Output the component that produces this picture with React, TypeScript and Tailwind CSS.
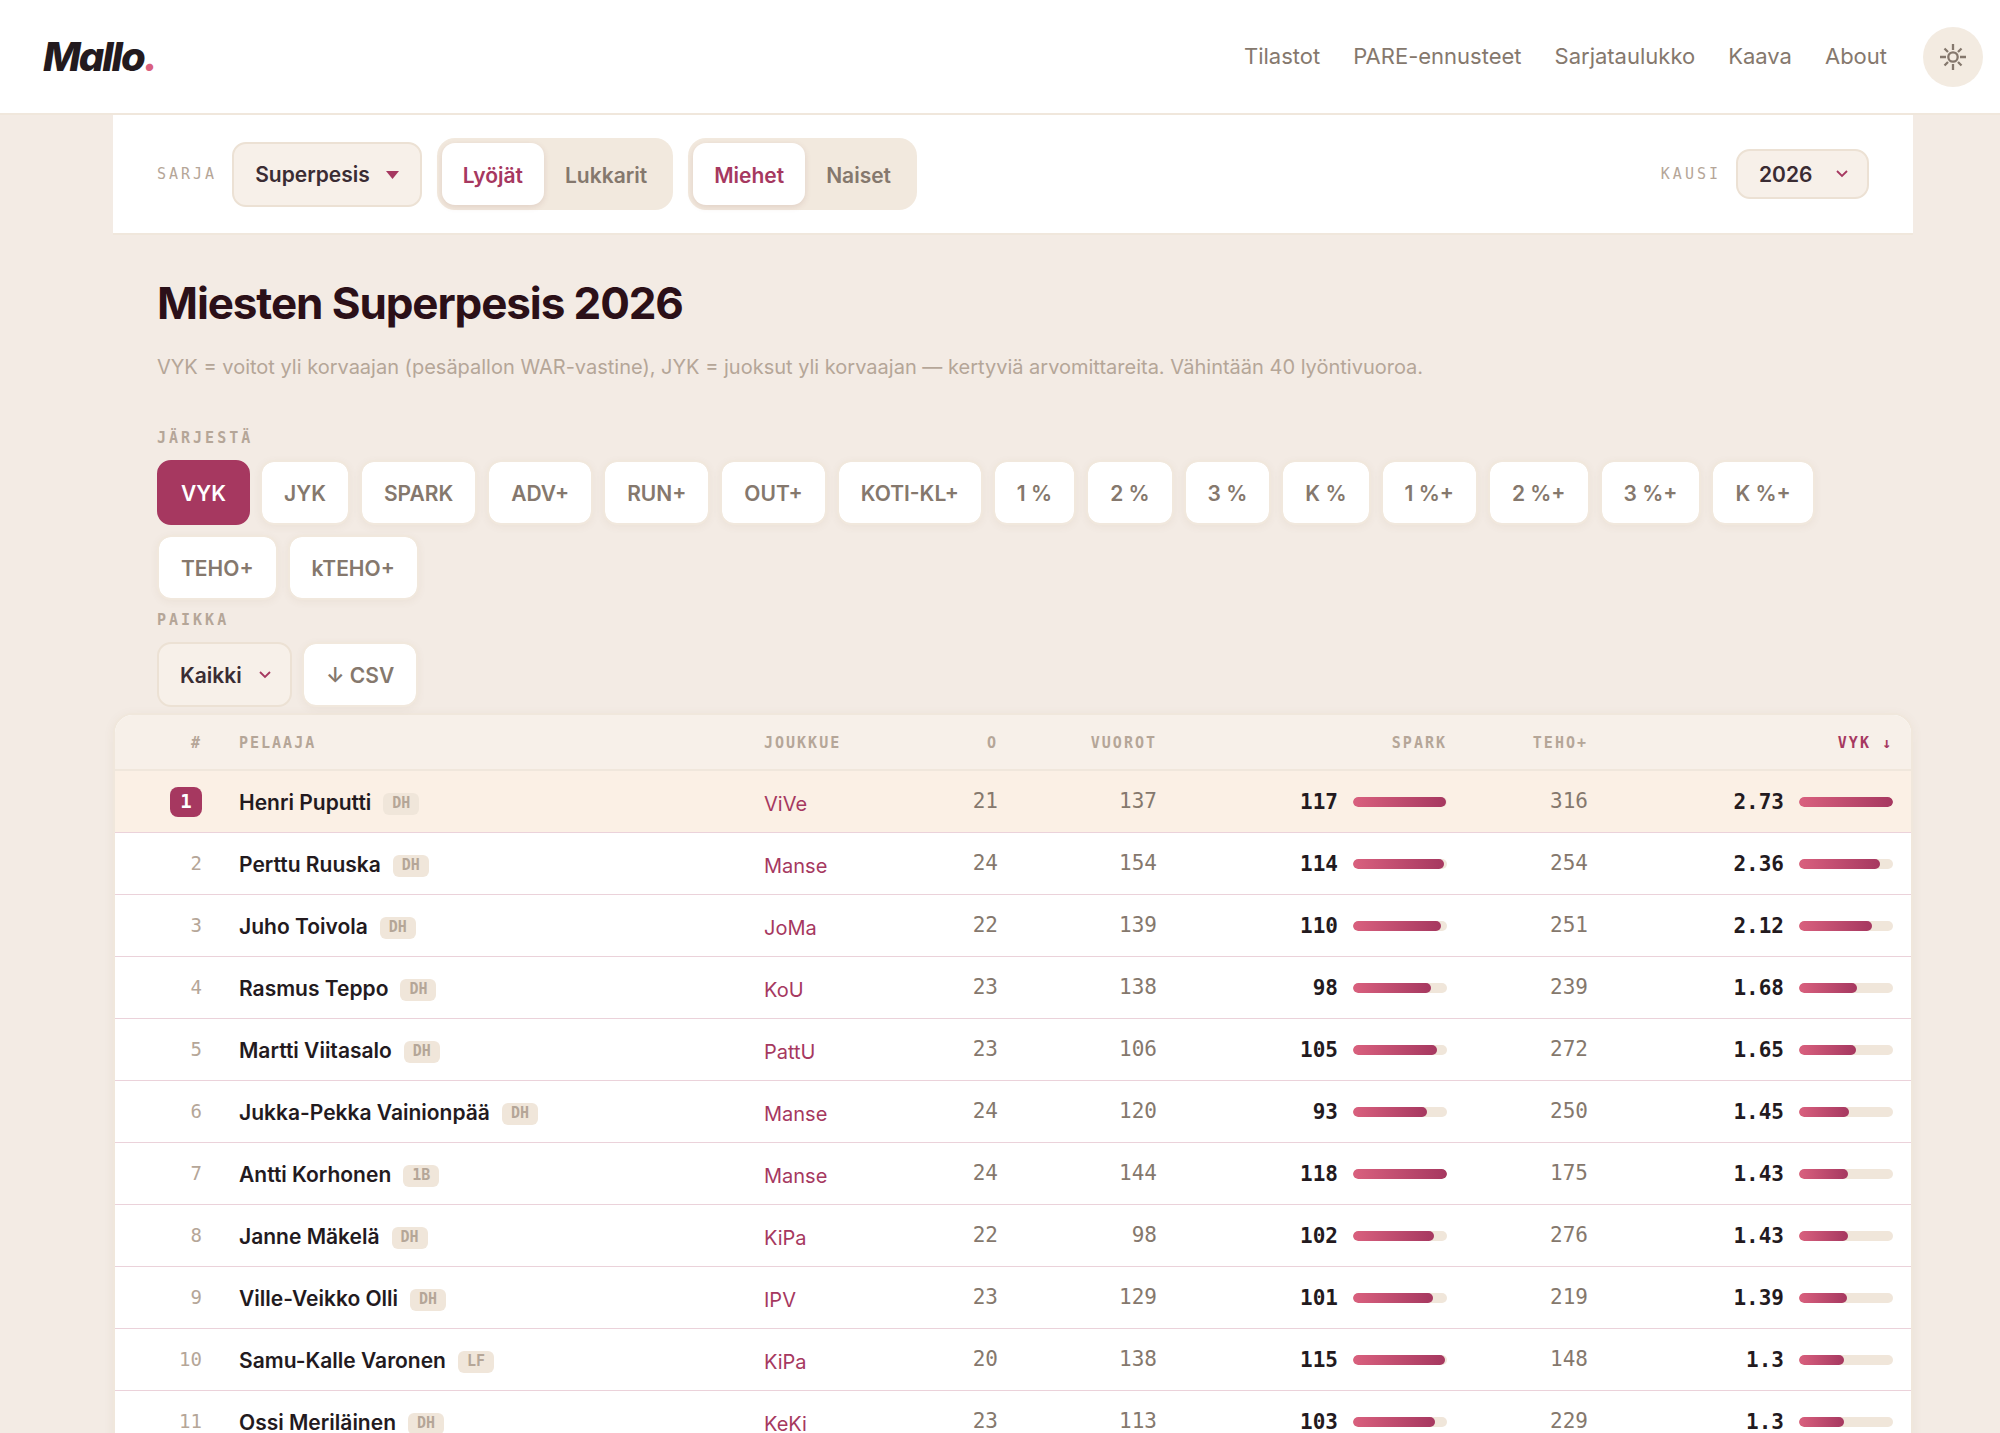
import React, { useState } from 'react';
import clsx from 'clsx';

const navLinks = ['Tilastot', 'PARE-ennusteet', 'Sarjataulukko', 'Kaava', 'About'];

const sortKeys = [
  'VYK', 'JYK', 'SPARK', 'ADV+', 'RUN+', 'OUT+', 'KOTI-KL+', '1 %', '2 %', '3 %', 'K %',
  '1 %+', '2 %+', '3 %+', 'K %+', 'TEHO+', 'kTEHO+',
];

type Player = {
  name: string;
  pos: string;
  team: string;
  games: number;
  turns: number;
  spark: number;
  teho: number;
  vyk: number;
};

const players: Player[] = [
  { name: 'Henri Puputti', pos: 'DH', team: 'ViVe', games: 21, turns: 137, spark: 117, teho: 316, vyk: 2.73 },
  { name: 'Perttu Ruuska', pos: 'DH', team: 'Manse', games: 24, turns: 154, spark: 114, teho: 254, vyk: 2.36 },
  { name: 'Juho Toivola', pos: 'DH', team: 'JoMa', games: 22, turns: 139, spark: 110, teho: 251, vyk: 2.12 },
  { name: 'Rasmus Teppo', pos: 'DH', team: 'KoU', games: 23, turns: 138, spark: 98, teho: 239, vyk: 1.68 },
  { name: 'Martti Viitasalo', pos: 'DH', team: 'PattU', games: 23, turns: 106, spark: 105, teho: 272, vyk: 1.65 },
  { name: 'Jukka-Pekka Vainionpää', pos: 'DH', team: 'Manse', games: 24, turns: 120, spark: 93, teho: 250, vyk: 1.45 },
  { name: 'Antti Korhonen', pos: '1B', team: 'Manse', games: 24, turns: 144, spark: 118, teho: 175, vyk: 1.43 },
  { name: 'Janne Mäkelä', pos: 'DH', team: 'KiPa', games: 22, turns: 98, spark: 102, teho: 276, vyk: 1.43 },
  { name: 'Ville-Veikko Olli', pos: 'DH', team: 'IPV', games: 23, turns: 129, spark: 101, teho: 219, vyk: 1.39 },
  { name: 'Samu-Kalle Varonen', pos: 'LF', team: 'KiPa', games: 20, turns: 138, spark: 115, teho: 148, vyk: 1.3 },
  { name: 'Ossi Meriläinen', pos: 'DH', team: 'KeKi', games: 23, turns: 113, spark: 103, teho: 229, vyk: 1.3 },
];

const maxSpark = Math.max(...players.map((p) => p.spark));
const maxVyk = Math.max(...players.map((p) => p.vyk));

const sans = "font-['Inter',sans-serif]";
const mono = "font-['DejaVu_Sans_Mono',monospace]";
const label = "font-['DejaVu_Sans_Mono',monospace] text-[15px] leading-5 tracking-[3px] text-[#b5a698]";
const th = 'h-[56px] border-b-2 border-[#f0e7dc] pl-[19px] pr-[18px] pt-[2px] text-[15px] font-bold tracking-[2px]';
const td = 'h-[62px] border-b border-[#ebd2da] pl-[19px] pr-[18px]';
const select = 'appearance-none border-2 border-[#ece1d4] bg-[#f7f0e9] pt-[2px] text-[21px] font-semibold text-[#3a2c33]';

function SunIcon() {
  return (
    <svg width="26" height="26" viewBox="0 0 26 26" fill="none" stroke="currentColor" strokeWidth="2.3" aria-hidden="true">
      <circle cx="13" cy="13" r="4.7" />
      <path d="M13 0v6M13 20v6M0 13h6M20 13h6M4.5 4.5L8 8M18 18l3.5 3.5M4.5 21.5L8 18M18 8l3.5-3.5" />
    </svg>
  );
}

function Chevron() {
  return (
    <svg width="14" height="10" viewBox="0 0 14 10" fill="none" stroke="#a63860" strokeWidth="1.8" className="pointer-events-none absolute right-[20px] top-1/2 -translate-y-1/2" aria-hidden="true">
      <path d="M2 2l5 5 5-5" />
    </svg>
  );
}

function Toggle({ options }: { options: string[] }) {
  const [active, setActive] = useState(options[0]);
  return (
    <div className="flex rounded-[18px] bg-[#f2e9de] p-[5px]">
      {options.map((o) => (
        <button
          key={o}
          type="button"
          aria-pressed={active === o}
          onClick={() => setActive(o)}
          className={clsx(
            'h-[62px] rounded-[13px] px-[21px] pt-[3px] text-[21px] font-semibold',
            active === o ? 'bg-white text-[#a63860] shadow-[0_2px_6px_rgba(120,60,50,0.14)]' : 'text-[#85786d]',
          )}
        >
          {o}
        </button>
      ))}
    </div>
  );
}

function Meter({ value, max }: { value: number; max: number }) {
  return (
    <div className="flex items-center justify-end gap-[15px]">
      <span className="font-bold leading-7 text-[#231a1e]">{value}</span>
      <span className="h-[10px] w-[94px] overflow-hidden rounded-full bg-[#f0e6da]">
        <span
          className="block h-full rounded-full bg-gradient-to-r from-[#d9607e] to-[#a63860]"
          style={{ width: `${(value / max) * 100}%` }}
        />
      </span>
    </div>
  );
}

function Header() {
  return (
    <header className="flex h-[115px] items-center justify-between border-b-2 border-[#f0e7dc] bg-white pl-[43px] pr-[17px]">
      <a href="#" className="text-[40px] font-extrabold italic leading-none tracking-tighter text-[#231a1e]">
        Mallo<span className="text-[#d9607e]">.</span>
      </a>
      <div className="flex items-center gap-9">
        <nav className="flex items-center gap-[33px] text-[22px] text-[#85786d]">
          {navLinks.map((l) => (
            <a key={l} href="#">{l}</a>
          ))}
        </nav>
        <button type="button" aria-label="Vaihda teema" className="flex size-[60px] items-center justify-center rounded-full bg-[#f3ebe1] text-[#85786d]">
          <SunIcon />
        </button>
      </div>
    </header>
  );
}

function Toolbar() {
  return (
    <div className="flex items-center justify-between border-b-2 border-[#f0e7dc] bg-white px-[44px] py-[23px]">
      <div className="flex items-center gap-[15px]">
        <span className={label}>SARJA</span>
        <button type="button" className={clsx(select, 'flex h-[65px] items-center gap-4 rounded-[14px] px-[21px]')}>
          Superpesis
          <svg width="13" height="8" viewBox="0 0 13 8" fill="#a63860" aria-hidden="true"><path d="M0 0h13L6.5 8z" /></svg>
        </button>
        <Toggle options={['Lyöjät', 'Lukkarit']} />
        <Toggle options={['Miehet', 'Naiset']} />
      </div>
      <div className="flex items-center gap-[15px]">
        <label htmlFor="season" className={label}>KAUSI</label>
        <div className="relative">
          <select id="season" className={clsx(select, 'h-[50px] w-[133px] rounded-[14px] pl-[21px]')}>
            <option>2026</option>
            <option>2025</option>
          </select>
          <Chevron />
        </div>
      </div>
    </div>
  );
}

function Filters() {
  const [sort, setSort] = useState('VYK');
  const pill = 'h-[65px] rounded-[14px] border-2 px-[22px] pt-[3px] text-[21px] font-semibold';
  const idle = 'border-[#f1e8dd] bg-white bg-clip-padding text-[#85786d] shadow-[0_2px_8px_rgba(120,80,50,0.06)]';
  return (
    <div className="px-[44px]">
      <div className={clsx(label, 'mb-3 font-bold')}>JÄRJESTÄ</div>
      <div className="mb-[10px] flex flex-wrap gap-[10px]">
        {sortKeys.map((k) => (
          <button
            key={k}
            type="button"
            aria-pressed={sort === k}
            onClick={() => setSort(k)}
            className={clsx(pill, sort === k ? 'border-[#a63860] bg-[#a63860] text-white' : idle)}
          >
            {k}
          </button>
        ))}
      </div>
      <label htmlFor="position" className={clsx(label, 'mb-3 block font-bold')}>PAIKKA</label>
      <div className="flex gap-[10px]">
        <div className="relative">
          <select id="position" className={clsx(select, 'h-[65px] w-[135px] rounded-[14px] pl-[21px]')}>
            <option>Kaikki</option>
            <option>DH</option>
            <option>1B</option>
            <option>LF</option>
          </select>
          <Chevron />
        </div>
        <button type="button" className={clsx(pill, idle)}>↓ CSV</button>
      </div>
    </div>
  );
}

function StatsTable() {
  return (
    <div className="mt-[6px] overflow-hidden rounded-[20px] border-2 border-[#f0e7dc] bg-white shadow-[0_2px_12px_rgba(120,80,50,0.06)]">
      <table className="w-full table-fixed border-separate border-spacing-0">
        <colgroup>
          <col className="w-[105px]" />
          <col />
          <col className="w-[170px]" />
          <col className="w-[101px]" />
          <col className="w-[159px]" />
          <col className="w-[290px]" />
          <col className="w-[141px]" />
          <col className="w-[305px]" />
        </colgroup>
        <thead className={clsx(mono, 'bg-[#f7f0e9] text-right text-[#b5a698]')}>
          <tr>
            <th className={th}>#</th>
            <th className={clsx(th, 'text-left')}>PELAAJA</th>
            <th className={clsx(th, 'text-left')}>JOUKKUE</th>
            <th className={th}>O</th>
            <th className={th}>VUOROT</th>
            <th className={th}>SPARK</th>
            <th className={th}>TEHO+</th>
            <th className={clsx(th, 'text-[#a63860]')}>VYK ↓</th>
          </tr>
        </thead>
        <tbody className={clsx(mono, 'text-right text-[21px] text-[#85786d]')}>
          {players.map((p, i) => (
            <tr key={p.name} className={i === 0 ? 'bg-[#fbf0e5]' : undefined}>
              <td className={clsx(td, 'text-[19px] text-[#b5a698]')}>
                {i === 0 ? (
                  <span className="inline-flex h-[30px] w-8 items-center justify-center rounded-[8px] bg-[#a63860] font-bold text-white">1</span>
                ) : (
                  i + 1
                )}
              </td>
              <td className={clsx(td, sans, 'pt-[2px] text-left')}>
                <div className="flex items-center gap-3">
                  <span className="font-semibold text-[#231a1e]">{p.name}</span>
                  <span className={clsx(mono, 'mt-[2px] flex h-[22px] w-9 items-center justify-center rounded-[6px] bg-[#f0e6da] text-[15px] font-bold text-[#b5a698]')}>
                    {p.pos}
                  </span>
                </div>
              </td>
              <td className={clsx(td, sans, 'pt-[4px] text-left')}>
                <a href="#" className="text-[20px] text-[#a63860]">{p.team}</a>
              </td>
              <td className={td}>{p.games}</td>
              <td className={td}>{p.turns}</td>
              <td className={td}><Meter value={p.spark} max={maxSpark} /></td>
              <td className={td}>{p.teho}</td>
              <td className={td}><Meter value={p.vyk} max={maxVyk} /></td>
            </tr>
          ))}
        </tbody>
      </table>
    </div>
  );
}

export default function App() {
  return (
    <div className={clsx(sans, 'min-h-screen bg-[#f3ebe4]')}>
      <Header />
      <div className="pl-[26px]">
        <main className="mx-auto max-w-[1800px]">
          <Toolbar />
          <div className="px-[44px] pb-[43px] pt-[42px]">
            <h1 className="text-[44px] font-bold leading-[52px] tracking-tight text-[#2b1018]">Miesten Superpesis 2026</h1>
            <p className="mt-5 text-[20px] leading-9 text-[#b5a698]">
              VYK = voitot yli korvaajan (pesäpallon WAR-vastine), JYK = juoksut yli korvaajan — kertyviä arvomittareita. Vähintään 40 lyöntivuoroa.
            </p>
          </div>
          <Filters />
          <StatsTable />
        </main>
      </div>
    </div>
  );
}
